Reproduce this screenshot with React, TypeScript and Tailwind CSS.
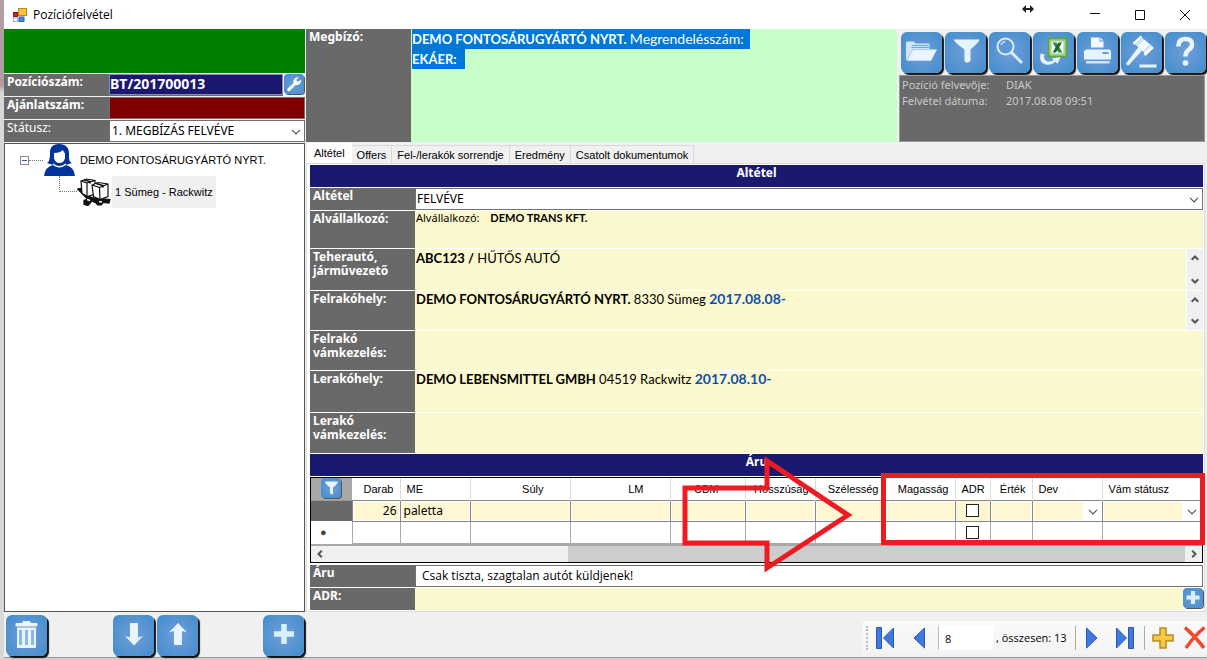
import type { ReactNode } from 'react'

interface FieldRow {
  label: string
  height: string
  scroll?: boolean
  content?: ReactNode
}

const tabs = ['Altétel', 'Offers', 'Fel-/lerakók sorrendje', 'Eredmény', 'Csatolt dokumentumok']

const fieldRows: FieldRow[] = [
  {
    label: 'Alvállalkozó:',
    height: 'h-[37px]',
    content: (
      <p className="text-[11px] leading-[14px]">
        <span className="font-['Noto_Sans']">Alvállalkozó:</span> <b className="ml-2">DEMO TRANS KFT.</b>
      </p>
    ),
  },
  {
    label: 'Teherautó, járművezető',
    height: 'h-[41px]',
    scroll: true,
    content: (
      <p className="text-[13px] leading-[18px]">
        <b>ABC123 /</b> HŰTŐS AUTÓ
      </p>
    ),
  },
  {
    label: 'Felrakóhely:',
    height: 'h-[39px]',
    scroll: true,
    content: (
      <p className="text-[13px] leading-4">
        <b>DEMO FONTOSÁRUGYÁRTÓ NYRT.</b> 8330 Sümeg <b className="text-sm leading-4 text-[#0f4fae]">2017.08.08-</b>
      </p>
    ),
  },
  { label: 'Felrakó vámkezelés:', height: 'h-[39px]' },
  {
    label: 'Lerakóhely:',
    height: 'h-[41px]',
    content: (
      <p className="text-[13px] leading-4">
        <b>DEMO LEBENSMITTEL GMBH</b> 04519 Rackwitz <b className="text-sm leading-4 text-[#0f4fae]">2017.08.10-</b>
      </p>
    ),
  },
  { label: 'Lerakó vámkezelés:', height: 'h-[40px]' },
]

interface Column {
  title: string
  width: string
  align?: string
  kind?: 'text' | 'check' | 'select'
  value?: string
}

const columns: Column[] = [
  { title: 'Darab', width: 'w-[48px]', align: 'text-right', value: '26' },
  { title: 'ME', width: 'w-[70px]', align: 'text-left', value: 'paletta' },
  { title: 'Súly', width: 'w-[100px]', align: 'text-right pr-5' },
  { title: 'LM', width: 'w-[100px]', align: 'text-right pr-5' },
  { title: 'CBM', width: 'w-[75px]', align: 'text-right pr-5' },
  { title: 'Hosszúság', width: 'w-[70px]', align: 'text-right' },
  { title: 'Szélesség', width: 'w-[70px]', align: 'text-right' },
  { title: 'Magasság', width: 'w-[70px]', align: 'text-right' },
  { title: 'ADR', width: 'w-[35px]', align: 'text-left', kind: 'check' },
  { title: 'Érték', width: 'w-[42px]', align: 'text-right' },
  { title: 'Dev', width: 'w-[70px]', align: 'text-left', kind: 'select' },
  { title: 'Vám státusz', width: 'w-auto', align: 'text-left', kind: 'select' },
]

const Chevron = ({ className = '' }: { className?: string }) => (
  <svg className={className} width="10" height="6" viewBox="0 0 10 6" fill="none" stroke="#555" strokeWidth="1.2">
    <path d="M1 .8 5 4.8 9 .8" />
  </svg>
)

const ScrollChevron = ({ className = '' }: { className?: string }) => (
  <svg className={className} width="8" height="6" viewBox="0 0 8 6" fill="none" stroke="#555" strokeWidth="2">
    <path d="M.7 4.8 4 1.5 7.3 4.8" />
  </svg>
)

const BlueButton = ({ label, children }: { label: string; children: ReactNode }) => (
  <button
    type="button"
    aria-label={label}
    className="size-[41px] shrink-0 rounded-md bg-radial from-[#6f9fda] to-[#408ccb] shadow-[2px_2px_1px_#111]"
  >
    <svg viewBox="0 0 41 41" className="size-full">
      {children}
    </svg>
  </button>
)

const SmallButton = ({ label, children }: { label: string; children: ReactNode }) => (
  <button
    type="button"
    aria-label={label}
    className="block size-5 shrink-0 rounded-sm bg-radial from-[#6f9fda] to-[#408ccb] shadow-[1px_1px_0_#555]"
  >
    <svg viewBox="0 0 20 20" className="size-full">
      {children}
    </svg>
  </button>
)

const Toolbar = () => (
  <div className="flex gap-[3px] pl-1 pt-[3px]">
    <BlueButton label="Megnyitás">
      <path d="M5 28V10.500l1-1h7l1.500 2h14V17H12L6 28Z" fill="#cfe6fa" />
      <path d="M11 13.500h17M10.500 15.500h17.500" stroke="#6ea5dc" />
      <path d="M12 17.500h24L30 28.800H6Z" fill="#e8f5ff" />
    </BlueButton>
    <BlueButton label="Szűrés">
      <path d="M8.500 7.500h26q-.5 3-4 5.500l-5 4.500v11.500q-4 3.500-6 0V17.500l-6-4.500q-4-3-5-5.500Z" fill="#e6f4ff" />
    </BlueButton>
    <BlueButton label="Keresés">
      <circle cx="16.500" cy="14.500" r="8" fill="#5c96d4" stroke="#dcedfb" strokeWidth="2" />
      <path d="M12 13q1-3 4.500-3.500" stroke="#b9d8f4" strokeWidth="1.500" fill="none" />
      <path d="M22.500 20.500 33 31" stroke="#dcedfb" strokeWidth="3" />
    </BlueButton>
    <BlueButton label="Excel">
      <rect x="15.500" y="6.500" width="18" height="18" fill="#b9dba8" stroke="#5aa83a" strokeWidth="2" />
      <rect x="18" y="9" width="13" height="13" fill="#fff" stroke="#91c27e" />
      <path d="M19.500 10.500h4l6 10h-4Z" fill="#2d8a3e" />
      <path d="M29 10.500h-3.500l-6 10H23Z" fill="#17692a" />
      <path d="M7.500 21.500q-2 9 5 11 6 1 10-3l2 2.500L27.500 25 19 26.500l1.500 1.500Q17 30.500 13.500 29 10 27 11.500 22.500Z" fill="#e4f3ff" />
    </BlueButton>
    <BlueButton label="Nyomtatás">
      <path d="M14 5.500h8.500v4H26.500v6H14ZM23.500 5.500l3 3h-3Z" fill="#f4faff" />
      <path d="M9 17.500h23.500l1.500 1.500v8.500H7V19Z" fill="#e6f4ff" />
      <path d="M25.500 21h6" stroke="#3d7ab8" strokeWidth="1.500" />
      <path d="M9 29h23.500v2.500H9Z" fill="#cfe6fa" />
    </BlueButton>
    <BlueButton label="Kalapács">
      <path d="M14.500 12.500 21.500 6l9.500 8-7 7.500Z" fill="#f1f9ff" />
      <path d="M12.500 12 20.500 4.500M23.500 23 32 15" stroke="#fff" strokeWidth="2.500" />
      <path d="M16 13.500 23 7M22 20l7.500-7" stroke="#8bb9e4" strokeWidth=".8" />
      <path d="m17.500 15 3.500 3.500L8 33q-2.500 1-3-1.500Z" fill="#e6f4ff" />
      <path d="M18.500 32.500h17v3h-17Z" fill="#e6f4ff" />
    </BlueButton>
    <BlueButton label="Súgó">
      <path d="M13.500 14.500V13q.500-6 7-6t6.500 5.500q0 3-3.500 5.500-3 2-3 6.500" fill="none" stroke="#e8f5ff" strokeWidth="4.500" />
      <circle cx="20.500" cy="31" r="2.800" fill="#e8f5ff" />
    </BlueButton>
  </div>
)

const TitleBar = () => (
  <header className="relative flex h-[29px] items-center bg-white pl-[9px]">
    <svg width="14" height="14" viewBox="0 0 14 14">
      <rect x="5.500" y=".5" width="8" height="7" fill="#f6c33c" stroke="#c58c14" />
      <rect x=".5" y="4.500" width="4" height="4" fill="#c22b20" stroke="#851b14" />
      <rect x=".5" y="10" width="4" height="3.500" fill="#fff" stroke="#aaa" />
      <rect x="6" y="9" width="5" height="4.500" fill="#4a86e0" stroke="#2e62b4" />
    </svg>
    <h1 className="ml-[6px] flex-1 font-['Open_Sans'] text-xs">Pozíciófelvétel</h1>
    <svg className="absolute right-[173px] top-[5px]" width="12" height="8" viewBox="0 0 12 8" fill="#222">
      <path d="M0 4 4 0v3h4V0l4 4-4 4V5H4v3Z" />
    </svg>
    <button type="button" aria-label="Kis méret" className="flex h-full w-[45px] items-center justify-center">
      <svg width="10" height="10" stroke="#111">
        <path d="M0 3.500h10" />
      </svg>
    </button>
    <button type="button" aria-label="Teljes méret" className="flex h-full w-[45px] items-center justify-center">
      <svg width="10" height="10" fill="none" stroke="#111">
        <path d="M.5.5h9v9h-9Z" />
      </svg>
    </button>
    <button type="button" aria-label="Bezárás" className="flex h-full w-[45px] items-center justify-center">
      <svg width="10" height="10" stroke="#111">
        <path d="m0 0 10 10M10 0 0 10" />
      </svg>
    </button>
  </header>
)

const Sidebar = () => (
  <aside className="flex w-[301px] shrink-0 flex-col">
    <div className="h-11 bg-[#008000]" />
    <div className="mt-px flex flex-col gap-px font-['Noto_Sans'] text-xs text-white">
      <div className="flex h-[22px] bg-[#696969]">
        <label htmlFor="position" className="w-[105px] pl-[3px] font-bold leading-4">
          Pozíciószám:
        </label>
        <input
          id="position"
          readOnly
          value="BT/201700013"
          className="mb-px min-w-0 flex-1 border border-[#8a8aa8] bg-[#191970] pb-[2px] text-sm font-bold"
        />
        <div className="w-[22px] bg-[#f0f0f0] pl-px">
          <SmallButton label="Beállítás">
            <path
              d="M15 3.500a4.500 4.500 0 0 0-5.500 5.700L3.600 14.500a1.500 1.500 0 0 0 2.300 2.200L11.500 11a4.500 4.500 0 0 0 5.400-5.500L14 8 12 6Z"
              fill="#fff"
            />
          </SmallButton>
        </div>
      </div>
      <div className="flex h-[22px] bg-[#696969]">
        <label htmlFor="offer" className="w-[105px] pl-[3px] font-bold leading-4">
          Ajánlatszám:
        </label>
        <input id="offer" className="min-w-0 flex-1 border border-[#707070] bg-[#800000]" />
      </div>
      <div className="relative flex h-[22px] bg-[#696969]">
        <label htmlFor="status" className="w-[105px] pl-[3px] leading-4">
          Státusz:
        </label>
        <select id="status" className="min-w-0 flex-1 appearance-none border border-[#707070] bg-white px-[2px] text-black">
          <option>1. MEGBÍZÁS FELVÉVE</option>
        </select>
        <Chevron className="pointer-events-none absolute right-1 top-[9px]" />
      </div>
    </div>

    <div className="mt-px flex-1 border border-[#555] bg-white text-[11px]">
      <ul>
        <li>
          <div className="flex h-8 items-center pl-[15px]">
            <button type="button" aria-label="Összecsukás" className="flex size-[9px] items-center border border-[#8c8c8c] px-px">
              <span className="h-px w-full bg-[#3556a8]" />
            </button>
            <span className="w-[14px] border-t border-dotted border-[#777]" />
            <svg className="ml-px" width="31" height="32" viewBox="0 0 31 32" fill="#00339b">
              <path d="M15 0C8 0 6 4 6 9c0 6-1 9-3 10l6 2q6 3 13 0l6-2c-3-1-3-4-3-10 0-5-3-9-10-9Z" />
              <path d="M10 9q6 0 9-3 1 3 2 3.500V14q-1 5-5.500 5T10 14Z" fill="#fff" />
              <path d="M0 32q1-9 9-11 6 4 13 0 8 2 9 11Z" />
              <path d="M9 20q6 5.500 13 0" stroke="#fff" strokeWidth="1.500" fill="none" />
            </svg>
            <span className="ml-[5px] whitespace-nowrap">DEMO FONTOSÁRUGYÁRTÓ NYRT.</span>
          </div>
          <ul className="pl-[54px]">
            <li className="flex h-8 items-start">
              <span className="h-4 w-[18px] border-b border-l border-dotted border-[#777]" />
              <svg className="mt-[2px]" width="34" height="28" viewBox="0 0 34 28" fill="#fff" stroke="#111" strokeWidth="1.200">
                <path d="M.5 11 4 10.500 7 17l10 3 16 1.500-1 3.500-6-.5-1.500 2.500h-4L19 25l-4-2-4 4.500-4-1v-4l3.500-1.500Z" fill="#111" />
                <path d="m4 3 5.500-2L18 2.500V16l-7.500 2.500L5 15.500ZM4 3l6 2v13M10 5l8-2.500" />
                <path d="m15 7 6-2.500L31 6v12.500L23 21.500l-6.500-3ZM15 7l7.500 2.500L23 21.500M22.500 9.500 31 6" />
                <path d="m7 2 6 1.500v2M19 5.500l7 2v2" fill="none" strokeWidth="1.600" />
                <path d="m10 21.500 3 1M22 23.500l3 .5" strokeWidth="1.500" stroke="#fff" />
              </svg>
              <span className="ml-px bg-[#f0f0f0] px-[3px] leading-8">1 Sümeg - Rackwitz</span>
            </li>
          </ul>
        </li>
      </ul>
    </div>

    <div className="flex h-[45px] justify-between pl-[2px] pr-px pt-[3px]">
      <BlueButton label="Törlés">
        <path d="M10 8.500h21v2.500H10ZM17 8V6.500h7V8" fill="#e8f5ff" stroke="#e8f5ff" />
        <path d="M11 12.500h19V33H11Z" fill="#e8f5ff" />
        <path d="M14.500 15v15M20.500 15v15M26.500 15v15" stroke="#8bb9e4" strokeWidth="3" />
      </BlueButton>
      <div className="flex gap-[3px]">
        <BlueButton label="Le">
          <path d="M17 8h8v14.500l5-1.500-9 9.500-9-9.500 5 1.500Z" fill="#e8f5ff" />
        </BlueButton>
        <BlueButton label="Fel">
          <path d="m21 8 9 9.500-5-1.500v14h-8V16l-5 1.500Z" fill="#e8f5ff" />
        </BlueButton>
      </div>
      <BlueButton label="Hozzáadás">
        <path d="M11 19h20M21 9v20" stroke="#dceffd" strokeWidth="5.500" />
      </BlueButton>
    </div>
  </aside>
)

const OrderHeader = () => (
  <section className="flex h-[113px]">
    <div className="w-[105px] shrink-0 bg-[#696969] pl-[3px] font-['Noto_Sans'] text-xs font-bold leading-4 text-white">
      Megbízó:
    </div>
    <div className="flex-1 bg-[#c8ffc8] pl-px font-['Lato'] text-[13px] leading-5 text-white">
      <p>
        <span className="inline-block bg-[#0078d7] pr-[6px]">
          <b>DEMO FONTOSÁRUGYÁRTÓ NYRT.</b> <span className="text-sm leading-5">Megrendelésszám:</span>
        </span>
      </p>
      <p>
        <b className="inline-block bg-[#0078d7] pr-2">EKÁER:</b>
      </p>
    </div>
    <div className="flex w-[310px] flex-col">
      <Toolbar />
      <dl className="mx-[2px] mt-[2px] grid flex-1 grid-cols-[104px_1fr] content-start border border-[#999] bg-[#696969] pl-[2px] pt-px font-['Noto_Sans'] text-[11px] leading-4 text-[#c8c8c8]">
        <dt>Pozíció felvevője:</dt>
        <dd>DIAK</dd>
        <dt>Felvétel dátuma:</dt>
        <dd>2017.08.08 09:51</dd>
      </dl>
    </div>
  </section>
)

const SectionTitle = ({ children }: { children: ReactNode }) => (
  <h2 className="h-[22px] bg-[#191970] text-center font-['Noto_Sans'] text-xs font-bold leading-4 text-white">{children}</h2>
)

const labelClass = "w-[105px] shrink-0 bg-[#696969] pl-[3px] pt-px font-['Noto_Sans'] text-xs font-bold leading-[14px] text-white"

const GoodsGrid = () => (
  <div className="relative mt-px border border-black bg-white text-[11px]">
    <table className="w-full table-fixed border-collapse">
      <colgroup>
        <col className="w-[41px]" />
        {columns.map((col) => (
          <col key={col.title} className={col.width} />
        ))}
      </colgroup>
      <thead>
        <tr className="h-[22px] border-b border-[#999]">
          <th className="bg-[#a8a8a8] p-0 pl-[10px] align-top">
            <SmallButton label="Szűrő">
              <path d="M4 3.500h13q0 2-5 6v7l-3-1V9.500q-5-4-5-6Z" fill="#e6f4ff" />
            </SmallButton>
          </th>
          {columns.map((col) => (
            <th key={col.title} className={`border-r border-[#ddd] py-0 font-normal whitespace-nowrap last:border-r-0 ${col.align}`}>
              <span className="px-[6px]">{col.title}</span>
            </th>
          ))}
        </tr>
      </thead>
      <tbody>
        <tr className="h-[21px]">
          <td className="bg-[#696969]" />
          {columns.map((col) => (
            <td key={col.title} className="border border-[#888] p-0">
              {col.kind === 'check' && (
                <div className="flex h-5 items-center justify-center bg-[#fff7d1]">
                  <input type="checkbox" aria-label="ADR" className="size-[13px] appearance-none border border-[#222] bg-white" />
                </div>
              )}
              {col.kind === 'select' && (
                <div className="relative flex h-5 p-px">
                  <select aria-label={col.title} className="mr-[18px] min-w-0 flex-1 appearance-none bg-[#fff7d1]" />
                  <Chevron className="pointer-events-none absolute right-1 top-2" />
                </div>
              )}
              {!col.kind && (
                <div className="flex h-5 p-px">
                  <input
                    aria-label={col.title}
                    defaultValue={col.value}
                    className={`w-full min-w-0 bg-[#fff7d1] px-[2px] font-['Noto_Sans'] text-xs ${col.value === '26' ? 'text-right' : ''}`}
                  />
                </div>
              )}
            </td>
          ))}
        </tr>
        <tr className="h-[22px]">
          <td className="pr-4 text-center text-[11px] text-[#444]">●</td>
          {columns.map((col) => (
            <td key={col.title} className="border border-[#aaa] p-0">
              {col.kind === 'check' && (
                <input type="checkbox" aria-label="ADR új sor" className="mx-auto block size-[13px] appearance-none border border-[#222] bg-white" />
              )}
            </td>
          ))}
        </tr>
      </tbody>
    </table>
    <div className="flex h-[18px] items-center border-t-2 border-[#a8a8a8] bg-[#f0f0f0]">
      <button type="button" aria-label="Balra" className="flex w-[17px] justify-center">
        <ScrollChevron className="-rotate-90" />
      </button>
      <div className="flex flex-1 self-stretch">
        <div className="ml-[28%] flex-1 bg-[#cdcdcd]" />
      </div>
      <button type="button" aria-label="Jobbra" className="flex w-[17px] justify-center">
        <ScrollChevron className="rotate-90" />
      </button>
    </div>

    {/* callouts drawn over the grid */}
    <svg className="pointer-events-none absolute left-[370px] top-[-22px]" width="174" height="120" viewBox="0 0 174 120">
      <path d="M4 32H86V5L167 59 86 112V87H4Z" fill="none" stroke="#ed1c24" strokeWidth="5" />
    </svg>
    <div className="pointer-events-none absolute -right-[3px] left-[570px] top-[-5px] h-[72px] border-[5px] border-[#ed1c24]" />
  </div>
)

const Navigator = () => (
  <nav className="ml-auto mt-[9px] flex h-[34px] items-center rounded-l-sm bg-linear-to-b from-[#fafafa] to-[#f3f3f3] pl-1 text-black">
    <span className="h-6 border-l-2 border-dotted border-[#bbb]" />
    <button type="button" aria-label="Első" className="ml-2">
      <svg width="18" height="22" viewBox="0 0 18 22" fill="#3f79e0" stroke="#2a58b8">
        <path d="M.5.500h5v21h-5ZM17.500 1v20L7.500 11Z" />
      </svg>
    </button>
    <button type="button" aria-label="Előző" className="ml-[19px]">
      <svg width="12" height="22" viewBox="0 0 12 22" fill="#3f79e0" stroke="#2a58b8">
        <path d="M11.500 1v20L1 11Z" />
      </svg>
    </button>
    <input
      aria-label="Aktuális tétel"
      defaultValue="8"
      className="ml-[13px] h-6 w-[55px] border-l border-[#bbb] bg-white pl-[6px] font-['Open_Sans'] text-[11px]"
    />
    <span className="ml-[3px] w-[78px] whitespace-nowrap font-['Open_Sans'] text-[11px]">, összesen: 13</span>
    <span className="ml-px h-6 border-l border-[#aaa]" />
    <button type="button" aria-label="Következő" className="ml-[10px]">
      <svg width="12" height="22" viewBox="0 0 12 22" fill="#3f79e0" stroke="#2a58b8">
        <path d="M.5 1v20L11 11Z" />
      </svg>
    </button>
    <button type="button" aria-label="Utolsó" className="ml-[18px]">
      <svg width="18" height="22" viewBox="0 0 18 22" fill="#3f79e0" stroke="#2a58b8">
        <path d="M12.500.500h5v21h-5ZM.5 1v20L10.500 11Z" />
      </svg>
    </button>
    <span className="ml-[10px] h-6 border-l border-[#aaa]" />
    <button type="button" aria-label="Új" className="ml-[7px]">
      <svg width="22" height="22" viewBox="0 0 22 22" fill="#f6c944" stroke="#b98a1c" strokeWidth="1.500">
        <path d="M8 1h6v7h7v6h-7v7H8v-7H1V8h7Z" />
      </svg>
    </button>
    <button type="button" aria-label="Eltávolítás" className="ml-[10px] mr-px">
      <svg width="22" height="24" viewBox="0 0 22 24" fill="none" stroke="#f4482c" strokeWidth="3.500">
        <path d="M1 1.500Q12 11 20 22M20.500 1.500Q10 10 2 22" />
      </svg>
    </button>
  </nav>
)

export default function App() {
  return (
    <div className="flex min-h-screen bg-[#cfcfcf] font-['Liberation_Sans',sans-serif] text-black">
      <div className="w-1 shrink-0 bg-linear-to-b from-[#b39da3] from-[13%] to-[#d8d8d8] to-[14%]" />
      <div className="flex min-w-0 flex-1 flex-col">
        <TitleBar />
        <div className="mb-[2px] flex flex-1 border-b border-[#999] bg-[#f0f0f0]">
          <Sidebar />
          <main className="ml-px flex min-w-0 flex-1 flex-col">
            <OrderHeader />
            <div role="tablist" className="mt-px flex items-end pl-px text-[11px]">
              {tabs.map((tab, index) => (
                <button
                  key={tab}
                  type="button"
                  role="tab"
                  aria-selected={index === 0}
                  className={
                    index === 0
                      ? 'h-5 bg-white px-[7px]'
                      : 'h-[18px] border-r border-t border-[#d9d9d9] px-[5px] leading-[18px]'
                  }
                >
                  {tab}
                </button>
              ))}
            </div>
            <section className="mr-[2px] flex-1 border border-[#dcdcdc] bg-white px-px pl-[3px] pt-px">
              <SectionTitle>Altétel</SectionTitle>
              <div className="relative mt-px flex h-[22px]">
                <label htmlFor="item" className={labelClass}>
                  Altétel
                </label>
                <select id="item" className="min-w-0 flex-1 appearance-none border border-[#707070] bg-white px-px font-['Noto_Sans'] text-xs">
                  <option>FELVÉVE</option>
                </select>
                <Chevron className="pointer-events-none absolute right-1 top-[9px]" />
              </div>
              {fieldRows.map((row) => (
                <div key={row.label} className={`mt-px flex ${row.height}`}>
                  <div className={labelClass}>{row.label}</div>
                  <div className="flex-1 bg-[#fbf8cd] pl-px font-['Lato']">{row.content}</div>
                  {row.scroll && (
                    <div className="ml-px flex w-4 flex-col items-center justify-between bg-[#f0f0f0] py-[6px]">
                      <ScrollChevron />
                      <ScrollChevron className="rotate-180" />
                    </div>
                  )}
                </div>
              ))}
              <div className="mt-px">
                <SectionTitle>Áru</SectionTitle>
              </div>
              <GoodsGrid />
              <div className="mt-[2px] flex h-[22px]">
                <label htmlFor="goods" className={labelClass}>
                  Áru
                </label>
                <input
                  id="goods"
                  defaultValue="Csak tiszta, szagtalan autót küldjenek!"
                  className="min-w-0 flex-1 border border-[#707070] px-[6px] font-['Open_Sans'] text-xs"
                />
              </div>
              <div className="mt-px flex h-[22px]">
                <label htmlFor="adr" className={labelClass}>
                  ADR:
                </label>
                <input id="adr" className="min-w-0 flex-1 bg-[#fbf8cd]" />
                <SmallButton label="ADR hozzáadása">
                  <path d="M3.500 9.500h13M10 3v13" stroke="#dceffd" strokeWidth="4" />
                </SmallButton>
              </div>
            </section>
            <div className="flex h-[45px]">
              <Navigator />
            </div>
          </main>
        </div>
      </div>
    </div>
  )
}
